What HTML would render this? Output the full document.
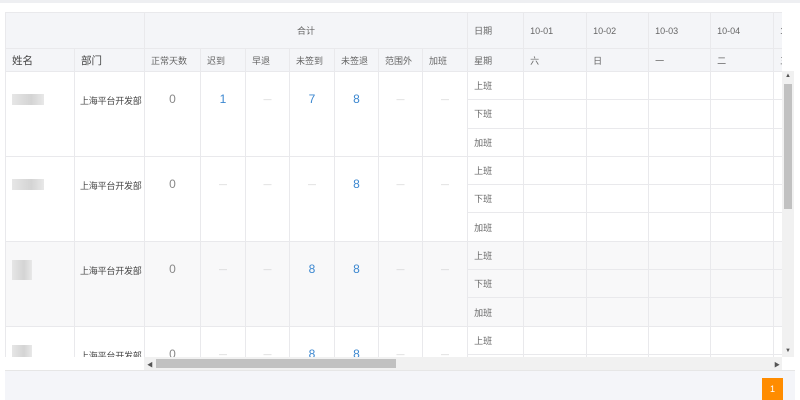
<!DOCTYPE html>
<html><head><meta charset="utf-8"><style>
*{margin:0;padding:0;box-sizing:border-box}
body{width:800px;height:400px;overflow:hidden;background:#fff;font-family:"Liberation Sans","Noto Sans CJK SC",sans-serif;position:relative}
.top{position:absolute;left:0;top:0;width:800px;height:3px;background:#eeeff2}
.wrap{position:absolute;left:5px;top:12px;width:777px;height:345px;overflow:hidden}
table{border-collapse:collapse;table-layout:fixed;width:830px}
td{border:1px solid #e9e9ec;font-size:9px;color:#666;padding:0 6px;white-space:nowrap;overflow:hidden}
thead td{background:#f4f5f8;height:36px}
thead tr.r2 td{height:23px}
.big{font-size:10.5px;color:#444}
.c{text-align:center}
tbody td{height:28.3px}
.v{vertical-align:top;padding-top:20px;text-align:center;font-size:12px;color:#888}
.b{color:#3b87d0}
.d{color:#ccc;font-size:8px;padding-top:23px}
.dept{vertical-align:top;padding:22px 0 0 5px;font-size:9px;color:#444;letter-spacing:-0.2px}
.nm{vertical-align:top;padding-top:22px}
.blur{width:32px;height:11px;background:linear-gradient(90deg,#e6e6e6,#d4d4d4 60%,#e8e8e8)}
.gray td{background:#f8f8f9}
.vs{position:absolute;left:782px;top:71px;width:12px;height:286px;background:#f1f1f1}
.vs div{position:absolute;left:2px;top:13px;width:8px;height:125px;background:#c1c1c1}
.hs{position:absolute;left:144px;top:357px;width:638px;height:13px;background:#f1f1f1}
.hs div{position:absolute;left:12px;top:2px;width:240px;height:9px;background:#c1c1c1}
.foot{position:absolute;left:5px;top:370px;width:790px;height:30px;background:#f4f5f9;border-top:1px solid #e6e6e6}
.pg{position:absolute;left:762px;top:378px;width:21px;height:22px;background:#ff8c00;color:#fff;font-size:9px;text-align:center;line-height:22px}
.arr{position:absolute;font-size:6px;color:#555}
</style></head><body>
<div class="top"></div>
<div class="wrap"><table>
<colgroup><col style="width:69px"><col style="width:70px"><col style="width:56px"><col style="width:45px"><col style="width:44px"><col style="width:45px"><col style="width:44px"><col style="width:44px"><col style="width:45px"><col style="width:56px"><col style="width:63px"><col style="width:62px"><col style="width:62px"><col style="width:63px"><col style="width:62px"></colgroup>
<thead>
<tr><td colspan="2"></td><td colspan="7" class="c">合计</td><td>日期</td><td>10-01</td><td>10-02</td><td>10-03</td><td>10-04</td><td>10-05</td></tr>
<tr class="r2"><td class="big">姓名</td><td class="big">部门</td><td>正常天数</td><td>迟到</td><td>早退</td><td>未签到</td><td>未签退</td><td>范围外</td><td>加班</td><td>星期</td><td>六</td><td>日</td><td>一</td><td>二</td><td>三</td></tr>
</thead>
<tbody>
<tr><td rowspan="3" class="nm"><div class="blur"></div></td><td rowspan="3" class="dept">上海平台开发部</td><td rowspan="3" class="v">0</td><td rowspan="3" class="v b">1</td><td rowspan="3" class="v d">—</td><td rowspan="3" class="v b">7</td><td rowspan="3" class="v b">8</td><td rowspan="3" class="v d">—</td><td rowspan="3" class="v d">—</td><td>上班</td><td></td><td></td><td></td><td></td><td></td></tr>
<tr><td>下班</td><td></td><td></td><td></td><td></td><td></td></tr>
<tr><td>加班</td><td></td><td></td><td></td><td></td><td></td></tr>
<tr><td rowspan="3" class="nm"><div class="blur"></div></td><td rowspan="3" class="dept">上海平台开发部</td><td rowspan="3" class="v">0</td><td rowspan="3" class="v d">—</td><td rowspan="3" class="v d">—</td><td rowspan="3" class="v d">—</td><td rowspan="3" class="v b">8</td><td rowspan="3" class="v d">—</td><td rowspan="3" class="v d">—</td><td>上班</td><td></td><td></td><td></td><td></td><td></td></tr>
<tr><td>下班</td><td></td><td></td><td></td><td></td><td></td></tr>
<tr><td>加班</td><td></td><td></td><td></td><td></td><td></td></tr>
<tr class="gray"><td rowspan="3" class="nm"><div class="blur" style="width:20px;height:20px;margin-top:-4px"></div></td><td rowspan="3" class="dept">上海平台开发部</td><td rowspan="3" class="v">0</td><td rowspan="3" class="v d">—</td><td rowspan="3" class="v d">—</td><td rowspan="3" class="v b">8</td><td rowspan="3" class="v b">8</td><td rowspan="3" class="v d">—</td><td rowspan="3" class="v d">—</td><td>上班</td><td></td><td></td><td></td><td></td><td></td></tr>
<tr class="gray"><td>下班</td><td></td><td></td><td></td><td></td><td></td></tr>
<tr class="gray"><td>加班</td><td></td><td></td><td></td><td></td><td></td></tr>
<tr><td rowspan="3" class="nm"><div class="blur" style="width:20px;height:20px;margin-top:-4px"></div></td><td rowspan="3" class="dept">上海平台开发部</td><td rowspan="3" class="v">0</td><td rowspan="3" class="v d">—</td><td rowspan="3" class="v d">—</td><td rowspan="3" class="v b">8</td><td rowspan="3" class="v b">8</td><td rowspan="3" class="v d">—</td><td rowspan="3" class="v d">—</td><td>上班</td><td></td><td></td><td></td><td></td><td></td></tr>
<tr><td>下班</td><td></td><td></td><td></td><td></td><td></td></tr>
<tr><td>加班</td><td></td><td></td><td></td><td></td><td></td></tr>
</tbody></table></div>
<div class="vs"><div></div></div>
<span class="arr" style="left:785px;top:73px">▲</span>
<span class="arr" style="left:785px;top:348px">▼</span>
<div class="hs"><div></div></div>
<span class="arr" style="left:147px;top:360px">◀</span>
<span class="arr" style="left:774px;top:360px">▶</span>
<div class="foot"></div>
<div class="pg">1</div>
</body></html>
